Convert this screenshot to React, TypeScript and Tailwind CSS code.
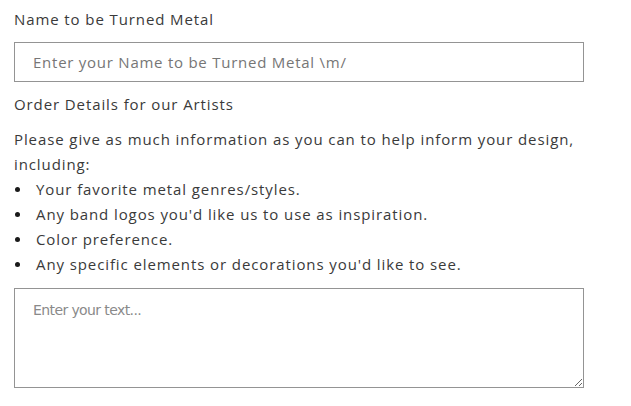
import React from "react";

const bullets = [
  "Your favorite metal genres/styles.",
  "Any band logos you'd like us to use as inspiration.",
  "Color preference.",
  "Any specific elements or decorations you'd like to see.",
];

export default function App() {
  return (
    <div
      className="min-h-screen bg-white pl-[14px] pt-[7px] tracking-[0.9px] text-[#3a3a3a]"
      style={{ fontFamily: '"Open Sans", "Liberation Sans", sans-serif' }}
    >
      <div className="w-[570px]">
        <label className="block text-[15px] leading-[25px]">Name to be Turned Metal</label>
        <input
          type="text"
          placeholder="Enter your Name to be Turned Metal \m/"
          className="mt-[10px] block h-[40px] w-full border border-[#949494] px-[18px] text-[15px] tracking-[0.75px] placeholder:text-[#767676]"
        />
        <label className="mt-[10px] block text-[15px] leading-[25px]">
          Order Details for our Artists
        </label>
        <div className="mt-[10px] text-[15px] leading-[25px]">
          <p>Please give as much information as you can to help inform your design, including:</p>
          <ul>
            {bullets.map((b) => (
              <li key={b} className="flex items-center">
                <span className="flex w-[22px] shrink-0 pl-[1px]">
                  <span className="h-[5px] w-[5px] rounded-full bg-[#1a1a1a]" />
                </span>
                <span>{b}</span>
              </li>
            ))}
          </ul>
        </div>
        <textarea
          placeholder="Enter your text..."
          className="mt-[11px] block h-[100px] w-full resize-y border border-[#949494] px-[18px] pt-[11px] text-[14px] tracking-[-0.6px] placeholder:text-[#8a8a8a]"
          style={{ fontFamily: '"DejaVu Sans", Verdana, sans-serif' }}
        />
      </div>
    </div>
  );
}
